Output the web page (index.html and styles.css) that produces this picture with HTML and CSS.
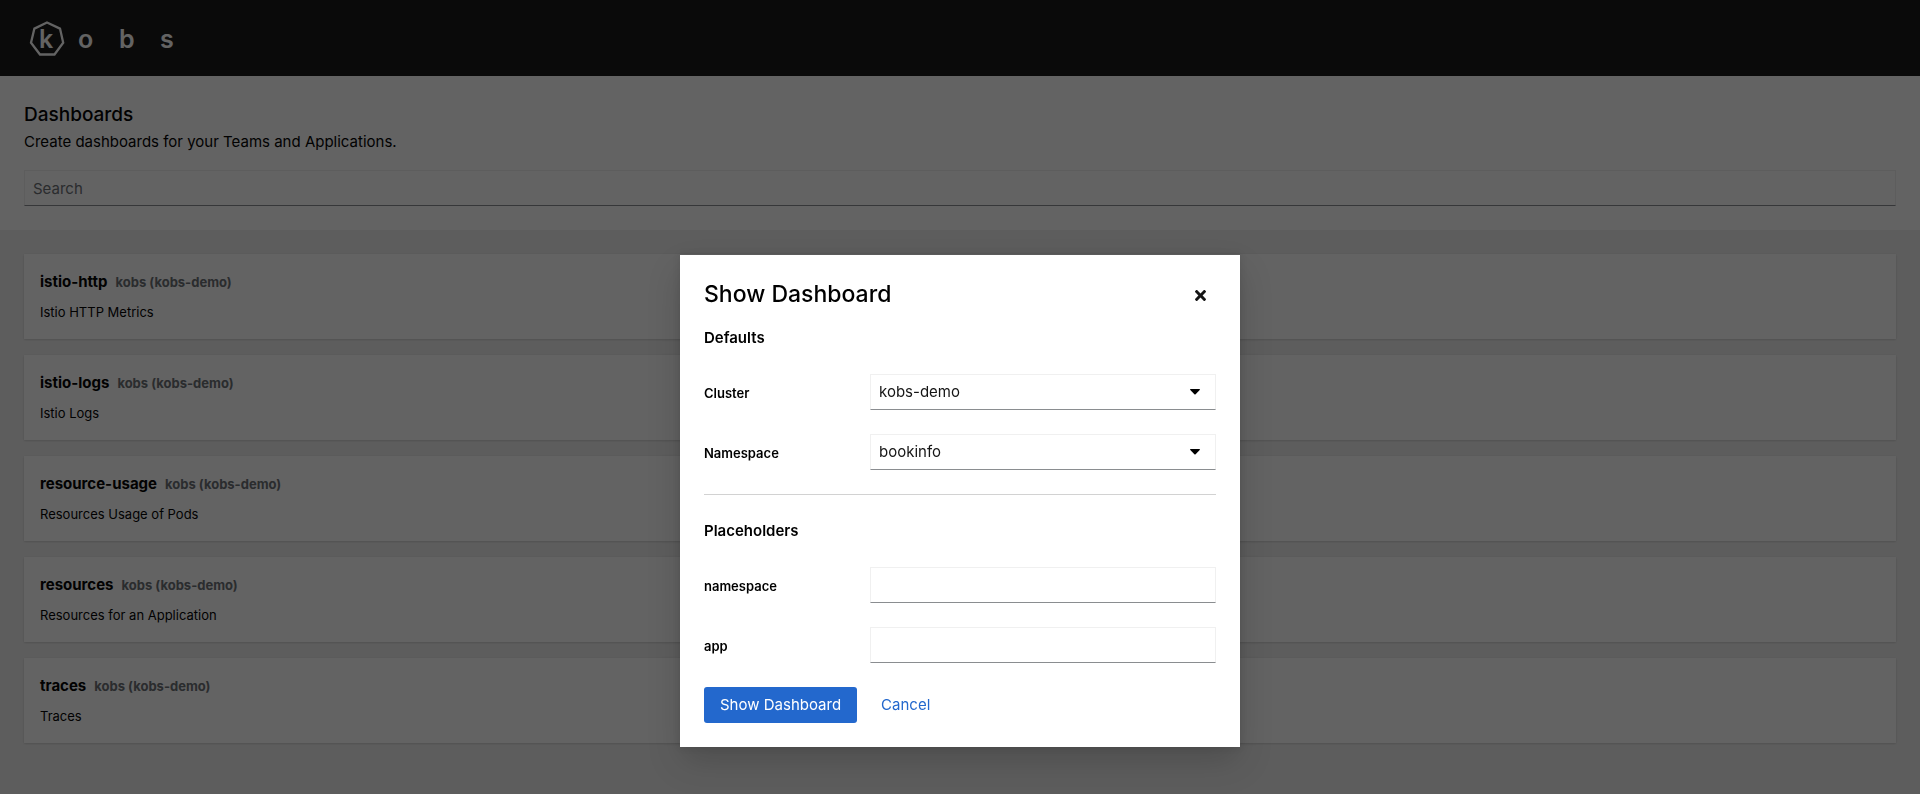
FILE: index.html
```html
<!DOCTYPE html>
<html lang="en">
<head>
<meta charset="utf-8">
<title>kobs</title>
<link rel="stylesheet" href="styles.css">
</head>
<body>
<header class="masthead">
  <a class="brand" href="#" aria-label="kobs">
    <svg class="brand-logo" width="150" height="44" viewBox="0 0 150 44">
      <path d="M23 6.500L36 12.600L39.200 26.800L30.500 38.500H16L7 26.800L10.400 12.600Z" fill="none" stroke="currentColor" stroke-width="2.300"/>
      <text x="15" y="32">k</text>
      <text x="54" y="32">o</text>
      <text x="95" y="32">b</text>
      <text x="136" y="32">s</text>
    </svg>
  </a>
</header>
<main>
  <section class="intro">
    <h1 class="intro-title">Dashboards</h1>
    <p class="intro-text">Create dashboards for your Teams and Applications.</p>
    <input class="control" type="search" placeholder="Search" aria-label="Search">
  </section>
  <section class="cards">
    <article class="card">
      <h2 class="card-title">istio-http<span class="card-source">kobs (kobs-demo)</span></h2>
      <p class="card-text">Istio HTTP Metrics</p>
    </article>
    <article class="card">
      <h2 class="card-title">istio-logs<span class="card-source">kobs (kobs-demo)</span></h2>
      <p class="card-text">Istio Logs</p>
    </article>
    <article class="card">
      <h2 class="card-title">resource-usage<span class="card-source">kobs (kobs-demo)</span></h2>
      <p class="card-text">Resources Usage of Pods</p>
    </article>
    <article class="card">
      <h2 class="card-title">resources<span class="card-source">kobs (kobs-demo)</span></h2>
      <p class="card-text">Resources for an Application</p>
    </article>
    <article class="card">
      <h2 class="card-title">traces<span class="card-source">kobs (kobs-demo)</span></h2>
      <p class="card-text">Traces</p>
    </article>
  </section>
</main>
<div class="backdrop">
  <div class="modal" role="dialog" aria-modal="true" aria-labelledby="modal-title">
    <div class="modal-head">
      <h2 class="modal-title" id="modal-title">Show Dashboard</h2>
      <button class="close" type="button" aria-label="Close">
        <svg width="11" height="11" viewBox="0 0 352 352" fill="currentColor"><path d="M242.720 176l100.070-100.070c12.280-12.280 12.280-32.190 0-44.480l-22.240-22.240c-12.280-12.280-32.190-12.280-44.480 0L176 109.280 75.930 9.210c-12.280-12.280-32.190-12.280-44.480 0L9.210 31.450c-12.280 12.280-12.280 32.190 0 44.480L109.280 176 9.210 276.070c-12.280 12.280-12.280 32.190 0 44.480l22.240 22.240c12.280 12.280 32.200 12.280 44.480 0L176 242.720l100.070 100.070c12.280 12.280 32.200 12.280 44.480 0l22.240-22.240c12.280-12.280 12.280-32.190 0-44.480L242.720 176z"/></svg>
      </button>
    </div>
    <form class="form">
      <h3 class="group-title">Defaults</h3>
      <div class="field">
        <label class="field-label" for="cluster">Cluster</label>
        <div class="select">
          <select class="control" id="cluster"><option>kobs-demo</option></select>
          <svg class="caret" width="10" height="6" viewBox="0 0 10 6"><path d="M.7 0H9.300Q10.400.2 9.700 1L5.600 5.200Q5 5.700 4.400 5.200L.3 1Q-.4.2.7 0Z"/></svg>
        </div>
      </div>
      <div class="field">
        <label class="field-label" for="default-namespace">Namespace</label>
        <div class="select">
          <select class="control" id="default-namespace"><option>bookinfo</option></select>
          <svg class="caret" width="10" height="6" viewBox="0 0 10 6"><path d="M.7 0H9.300Q10.400.2 9.700 1L5.600 5.200Q5 5.700 4.400 5.200L.3 1Q-.4.2.7 0Z"/></svg>
        </div>
      </div>
      <hr class="divider">
      <h3 class="group-title">Placeholders</h3>
      <div class="field">
        <label class="field-label" for="namespace">namespace</label>
        <input class="control" type="text" id="namespace">
      </div>
      <div class="field">
        <label class="field-label" for="app">app</label>
        <input class="control" type="text" id="app">
      </div>
      <div class="actions">
        <button class="button button-primary" type="button">Show Dashboard</button>
        <button class="button button-link" type="button">Cancel</button>
      </div>
    </form>
  </div>
</div>
</body>
</html>
```
FILE: styles.css
```css
* {
  box-sizing: border-box;
}

body {
  margin: 0;
  min-height: 100vh;
  background: #f0f0f0;
  color: #000;
  font-family: Inter, "Liberation Sans", sans-serif;
  font-size: 15px;
  line-height: 24px;
}

h1, h2, h3, p {
  margin: 0;
}

button, input, select {
  font: inherit;
}

.masthead {
  display: flex;
  align-items: center;
  height: 76px;
  padding: 0 24px;
  background: #151515;
}

.brand {
  display: flex;
  color: #fff;
}

.brand-logo text {
  fill: currentColor;
  font-size: 25px;
  font-weight: 600;
}

.intro {
  padding: 24px;
  background: #fff;
}

.intro-title {
  font-size: 19px;
  font-weight: 500;
  line-height: 30px;
}

.intro-text {
  margin-bottom: 16px;
}

.control {
  display: block;
  width: 100%;
  height: 36px;
  margin: 0;
  padding: 0 8px;
  appearance: none;
  border: 1px solid #f0f0f0;
  border-bottom-color: #8a8d90;
  border-radius: 0;
  background: #fff;
  color: #151515;
}

.control::placeholder {
  color: #6a6e73;
  opacity: 1;
}

.cards {
  display: grid;
  gap: 16px;
  padding: 24px;
}

.card {
  display: grid;
  gap: 8px;
  padding: 16px;
  background: #fff;
  box-shadow: 0 1px 2px rgba(3, 3, 3, .12), 0 0 2px rgba(3, 3, 3, .06);
}

.card-title {
  font-size: 15px;
  font-weight: 700;
}

.card-source {
  margin-left: 8px;
  color: #6a6e73;
  font-size: 13px;
}

.card-text {
  font-size: 13px;
  line-height: 21px;
}

.backdrop {
  position: fixed;
  inset: 0;
  overflow: auto;
  padding: 255px 16px 24px;
  background: rgba(3, 3, 3, .62);
}

.modal {
  max-width: 560px;
  margin: 0 auto;
  padding: 24px;
  background: #fff;
  box-shadow: 0 16px 32px rgba(3, 3, 3, .16), 0 0 8px rgba(3, 3, 3, .1);
}

.modal-head {
  display: flex;
  align-items: center;
  justify-content: space-between;
  margin-bottom: 16px;
}

.modal-title {
  font-size: 23px;
  font-weight: 500;
  line-height: 31px;
}

.close {
  display: grid;
  place-items: center;
  width: 32px;
  height: 31px;
  padding: 2px 0 0;
  border: 0;
  background: none;
  color: #151515;
}

.form {
  display: grid;
  gap: 24px;
}

.group-title {
  font-size: 15px;
  font-weight: 600;
}

.field {
  display: grid;
  grid-template-columns: 150px 1fr;
  gap: 16px;
}

.field-label {
  padding-top: 9px;
  font-size: 13px;
  font-weight: 600;
  line-height: 21px;
}

.select {
  display: grid;
  align-items: center;
}

.select .control,
.caret {
  grid-area: 1 / 1;
}

.caret {
  justify-self: end;
  margin-right: 16px;
  pointer-events: none;
}

.divider {
  width: 100%;
  height: 1px;
  margin: 0;
  border: 0;
  background: #d2d2d2;
}

.actions {
  display: flex;
  gap: 8px;
}

.button {
  height: 36px;
  padding: 0 16px;
  border: 0;
  border-radius: 3px;
  background: none;
}

.button-primary {
  background: #2368cd;
  color: #fff;
}

.button-link {
  color: #2368cd;
}
```
